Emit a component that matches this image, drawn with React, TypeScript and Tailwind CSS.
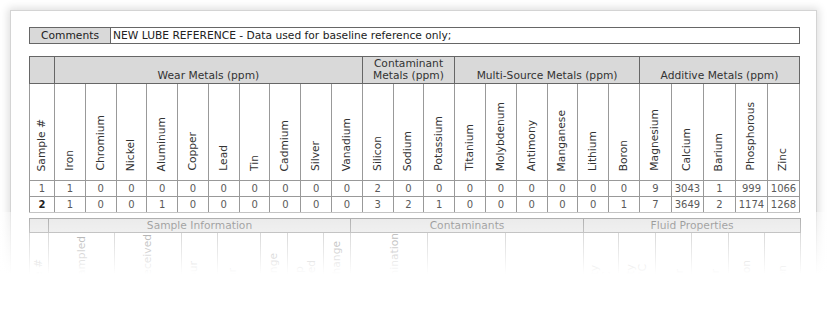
import React from "react";

const font = { fontFamily: '"DejaVu Sans", "Liberation Sans", sans-serif' };

const wearMetals = ["Iron", "Chromium", "Nickel", "Aluminum", "Copper", "Lead", "Tin", "Cadmium", "Silver", "Vanadium"];
const contaminantMetals = ["Silicon", "Sodium", "Potassium"];
const multiSource = ["Titanium", "Molybdenum", "Antimony", "Manganese", "Lithium", "Boron"];
const additive = ["Magnesium", "Calcium", "Barium", "Phosphorous", "Zinc"];

const samples = [
  { id: "1", bold: false, values: [1, 0, 0, 0, 0, 0, 0, 0, 0, 0, 2, 0, 0, 0, 0, 0, 0, 0, 0, 9, 3043, 1, 999, 1066] },
  { id: "2", bold: true, values: [1, 0, 0, 1, 0, 0, 0, 0, 0, 0, 3, 2, 1, 0, 0, 0, 0, 0, 1, 7, 3649, 2, 1174, 1268] },
];

// second (faded) table
const infoCols = [
  { label: "Sample #", w: "w-[19px]" },
  { label: "Date Sampled", w: "w-[66px]" },
  { label: "Date Received", w: "w-[67px]" },
  { label: "Unit Hour\nTime", w: "w-[36px]" },
  { label: "Oil Hour\nTime", w: "w-[43px]" },
  { label: "Oil Change", w: "w-[27px]" },
  { label: "Make-up\nOil Added", w: "w-[36px]" },
  { label: "Filter Change", w: "w-[27px]" },
];
const contamCols = [
  { label: "Glycol\nContamination", w: "w-[77px]" },
  { label: "Soot %", w: "w-[78px]" },
  { label: "Water", w: "w-[78px]" },
];
const fluidCols = [
  { label: "Viscosity\n@ 40°C", w: "w-[35px]" },
  { label: "Viscosity\n@ 100°C", w: "w-[37px]" },
  { label: "Acid\nNumber", w: "w-[36px]" },
  { label: "Base\nNumber", w: "w-[37px]" },
  { label: "Oxidation", w: "w-[36px]" },
  { label: "Nitration", w: "w-[36px]" },
];

const Rotated: React.FC<{ children: React.ReactNode }> = ({ children }) => (
  <span className="inline-block [writing-mode:vertical-rl] rotate-180 whitespace-pre-line text-left leading-[12px]">
    {children}
  </span>
);

const GroupHead: React.FC<{ span: number; children: React.ReactNode }> = ({ span, children }) => (
  <th
    colSpan={span}
    className="border border-[#666] bg-[#d9d9d9] align-bottom pb-[1px] font-normal leading-[12px] text-[#333]"
  >
    {children}
  </th>
);

export default function App() {
  const allMetals = [...wearMetals, ...contaminantMetals, ...multiSource, ...additive];
  const lowerCols = [...infoCols, ...contamCols, ...fluidCols];

  return (
    <div className="relative h-[309px] w-[827px] overflow-hidden bg-white" style={font}>
      <div className="ml-[10px] mt-[10px] w-[807px] border border-[#d4d4d4] bg-white pl-[18px] pt-[16px] pb-[80px] shadow-[0_0_8px_2px_rgba(0,0,0,0.13)]">
        {/* Comments */}
        <div className="flex h-[17px] w-[771px] border border-[#666] text-[10.7px] leading-[15px] text-[#222]">
          <div className="w-[81px] shrink-0 border-r border-[#666] bg-[#d9d9d9] text-center">Comments</div>
          <div className="pl-[2px]">NEW LUBE REFERENCE - Data used for baseline reference only;</div>
        </div>

        {/* Metals */}
        <table className="mt-[12px] w-[771px] table-fixed border-collapse text-[10.7px] text-[#333]">
          <colgroup>
            <col className="w-[25px]" />
            {allMetals.map((m, i) => (
              <col key={m} className={i >= 19 ? "w-[32px]" : ""} />
            ))}
          </colgroup>
          <thead>
            <tr className="h-[27px]">
              <th className="border border-[#666] bg-[#d9d9d9]" />
              <GroupHead span={10}>Wear Metals (ppm)</GroupHead>
              <GroupHead span={3}>
                Contaminant
                <br />
                Metals (ppm)
              </GroupHead>
              <GroupHead span={6}>Multi-Source Metals (ppm)</GroupHead>
              <GroupHead span={5}>Additive Metals (ppm)</GroupHead>
            </tr>
            <tr className="h-[97px]">
              <th className="border border-[#999] align-bottom pb-[4px] font-normal">
                <Rotated>Sample #</Rotated>
              </th>
              {allMetals.map((m) => (
                <th key={m} className="border border-[#999] align-bottom pb-[4px] font-normal">
                  <Rotated>{m}</Rotated>
                </th>
              ))}
            </tr>
          </thead>
          <tbody className="text-[10px] text-[#5a5a5a]">
            {samples.map((s) => (
              <tr key={s.id} className="h-[16px]">
                <td className={"border border-[#999] text-center leading-[14px] " + (s.bold ? "font-bold text-[#222]" : "")}>
                  {s.id}
                </td>
                {s.values.map((v, i) => (
                  <td key={i} className="border border-[#999] text-center leading-[14px]">
                    {v}
                  </td>
                ))}
              </tr>
            ))}
          </tbody>
        </table>

        {/* Sample info (faded) */}
        <table className="mt-[5px] w-[771px] table-fixed border-collapse text-[10.7px] text-[#333]">
          <colgroup>
            {lowerCols.map((c) => (
              <col key={c.label} className={c.w} />
            ))}
          </colgroup>
          <thead>
            <tr className="h-[14px]">
              <th className="border border-[#666] bg-[#d9d9d9]" />
              <th colSpan={7} className="border border-[#666] bg-[#d9d9d9] font-normal leading-[12px]">
                Sample Information
              </th>
              <th colSpan={3} className="border border-[#666] bg-[#d9d9d9] font-normal leading-[12px]">
                Contaminants
              </th>
              <th colSpan={6} className="border border-[#666] bg-[#d9d9d9] font-normal leading-[12px]">
                Fluid Properties
              </th>
            </tr>
            <tr className="h-[80px]">
              {lowerCols.map((c) => (
                <th key={c.label} className="border border-[#999] align-bottom pb-[4px] font-normal">
                  <Rotated>{c.label}</Rotated>
                </th>
              ))}
            </tr>
          </thead>
        </table>
      </div>

      {/* fade-out over the lower part of the page */}
      <div className="pointer-events-none absolute inset-x-0 top-[212px] bottom-0 bg-[linear-gradient(to_bottom,rgba(255,255,255,0.42)_0px,#fff_62px)]" />
    </div>
  );
}
